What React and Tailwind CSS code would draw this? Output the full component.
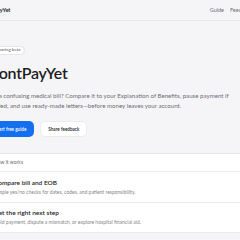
export default function App() {
  const steps = [
    { title: "Compare bill and EOB", text: "Simple yes/no checks for dates, codes, and patient responsibility." },
    { title: "Get the right next step", text: "Hold payment, dispute a mismatch, or explore hospital financial aid." },
  ];

  return (
    <div className="w-[240px] h-[240px] overflow-hidden bg-[#f5f5f7] font-['Lato',sans-serif] text-[#1d1d1f]">
      <div className="ml-[-13px] w-[266px]">
        {/* Header */}
        <header className="h-[21px] flex items-center justify-between border-b border-[#e6e6ea]">
          <span className="ml-[-6px] text-[5.6px] font-bold">DontPayYet</span>
          <nav className="flex gap-[6px] text-[5.5px] text-[#6e6e73]">
            <span>Guide</span>
            <span>Feedback</span>
          </nav>
        </header>

        {/* Hero */}
        <section className="pt-[25px]">
          <div className="flex w-fit items-center gap-[1.5px] h-[9px] px-[3.5px] rounded-full bg-white border border-[#e3e3e8] text-[4.5px] leading-none text-[#555]">
            <span className="w-[3px] h-[3px] rounded-full bg-[#22c55e]" />
            Sharing beta
          </div>
          <h1 className="mt-[7.5px] text-[16px] leading-[20px] font-semibold tracking-[-0.3px]">DontPayYet</h1>
          <p className="mt-[8px] max-w-[250px] text-[6.15px] leading-[10.5px] text-[#6e6e73]">
            Got a confusing medical bill? Compare it to your Explanation of Benefits, pause payment if
            needed, and use ready-made letters—before money leaves your account.
          </p>
          <div className="mt-[9.5px] flex gap-[6px]">
            <button className="h-[16px] px-[8px] rounded-[5px] bg-[#1570ef] text-white text-[4.6px] leading-none font-semibold">
              Start free guide
            </button>
            <button className="h-[16px] px-[7px] rounded-[5px] bg-white border border-[#ececf0] text-[4.6px] leading-none font-semibold text-[#1d1d1f]">
              Share feedback
            </button>
          </div>
        </section>

        {/* How it works */}
        <section className="mt-[16px] bg-white border-t border-[#e6e6ea]">
          <div className="h-[18px] flex items-center px-[7px] border-b border-[#ececf0] text-[5px] text-[#6e6e73]">
            How it works
          </div>
          {steps.map((s) => (
            <div key={s.title} className="h-[30.5px] flex flex-col justify-center px-[7px] border-b border-[#ececf0]">
              <div className="text-[6.5px] font-semibold leading-[9px]">{s.title}</div>
              <div className="mt-[1px] text-[5px] leading-[8px] text-[#86868b]">{s.text}</div>
            </div>
          ))}
        </section>
      </div>
    </div>
  );
}
